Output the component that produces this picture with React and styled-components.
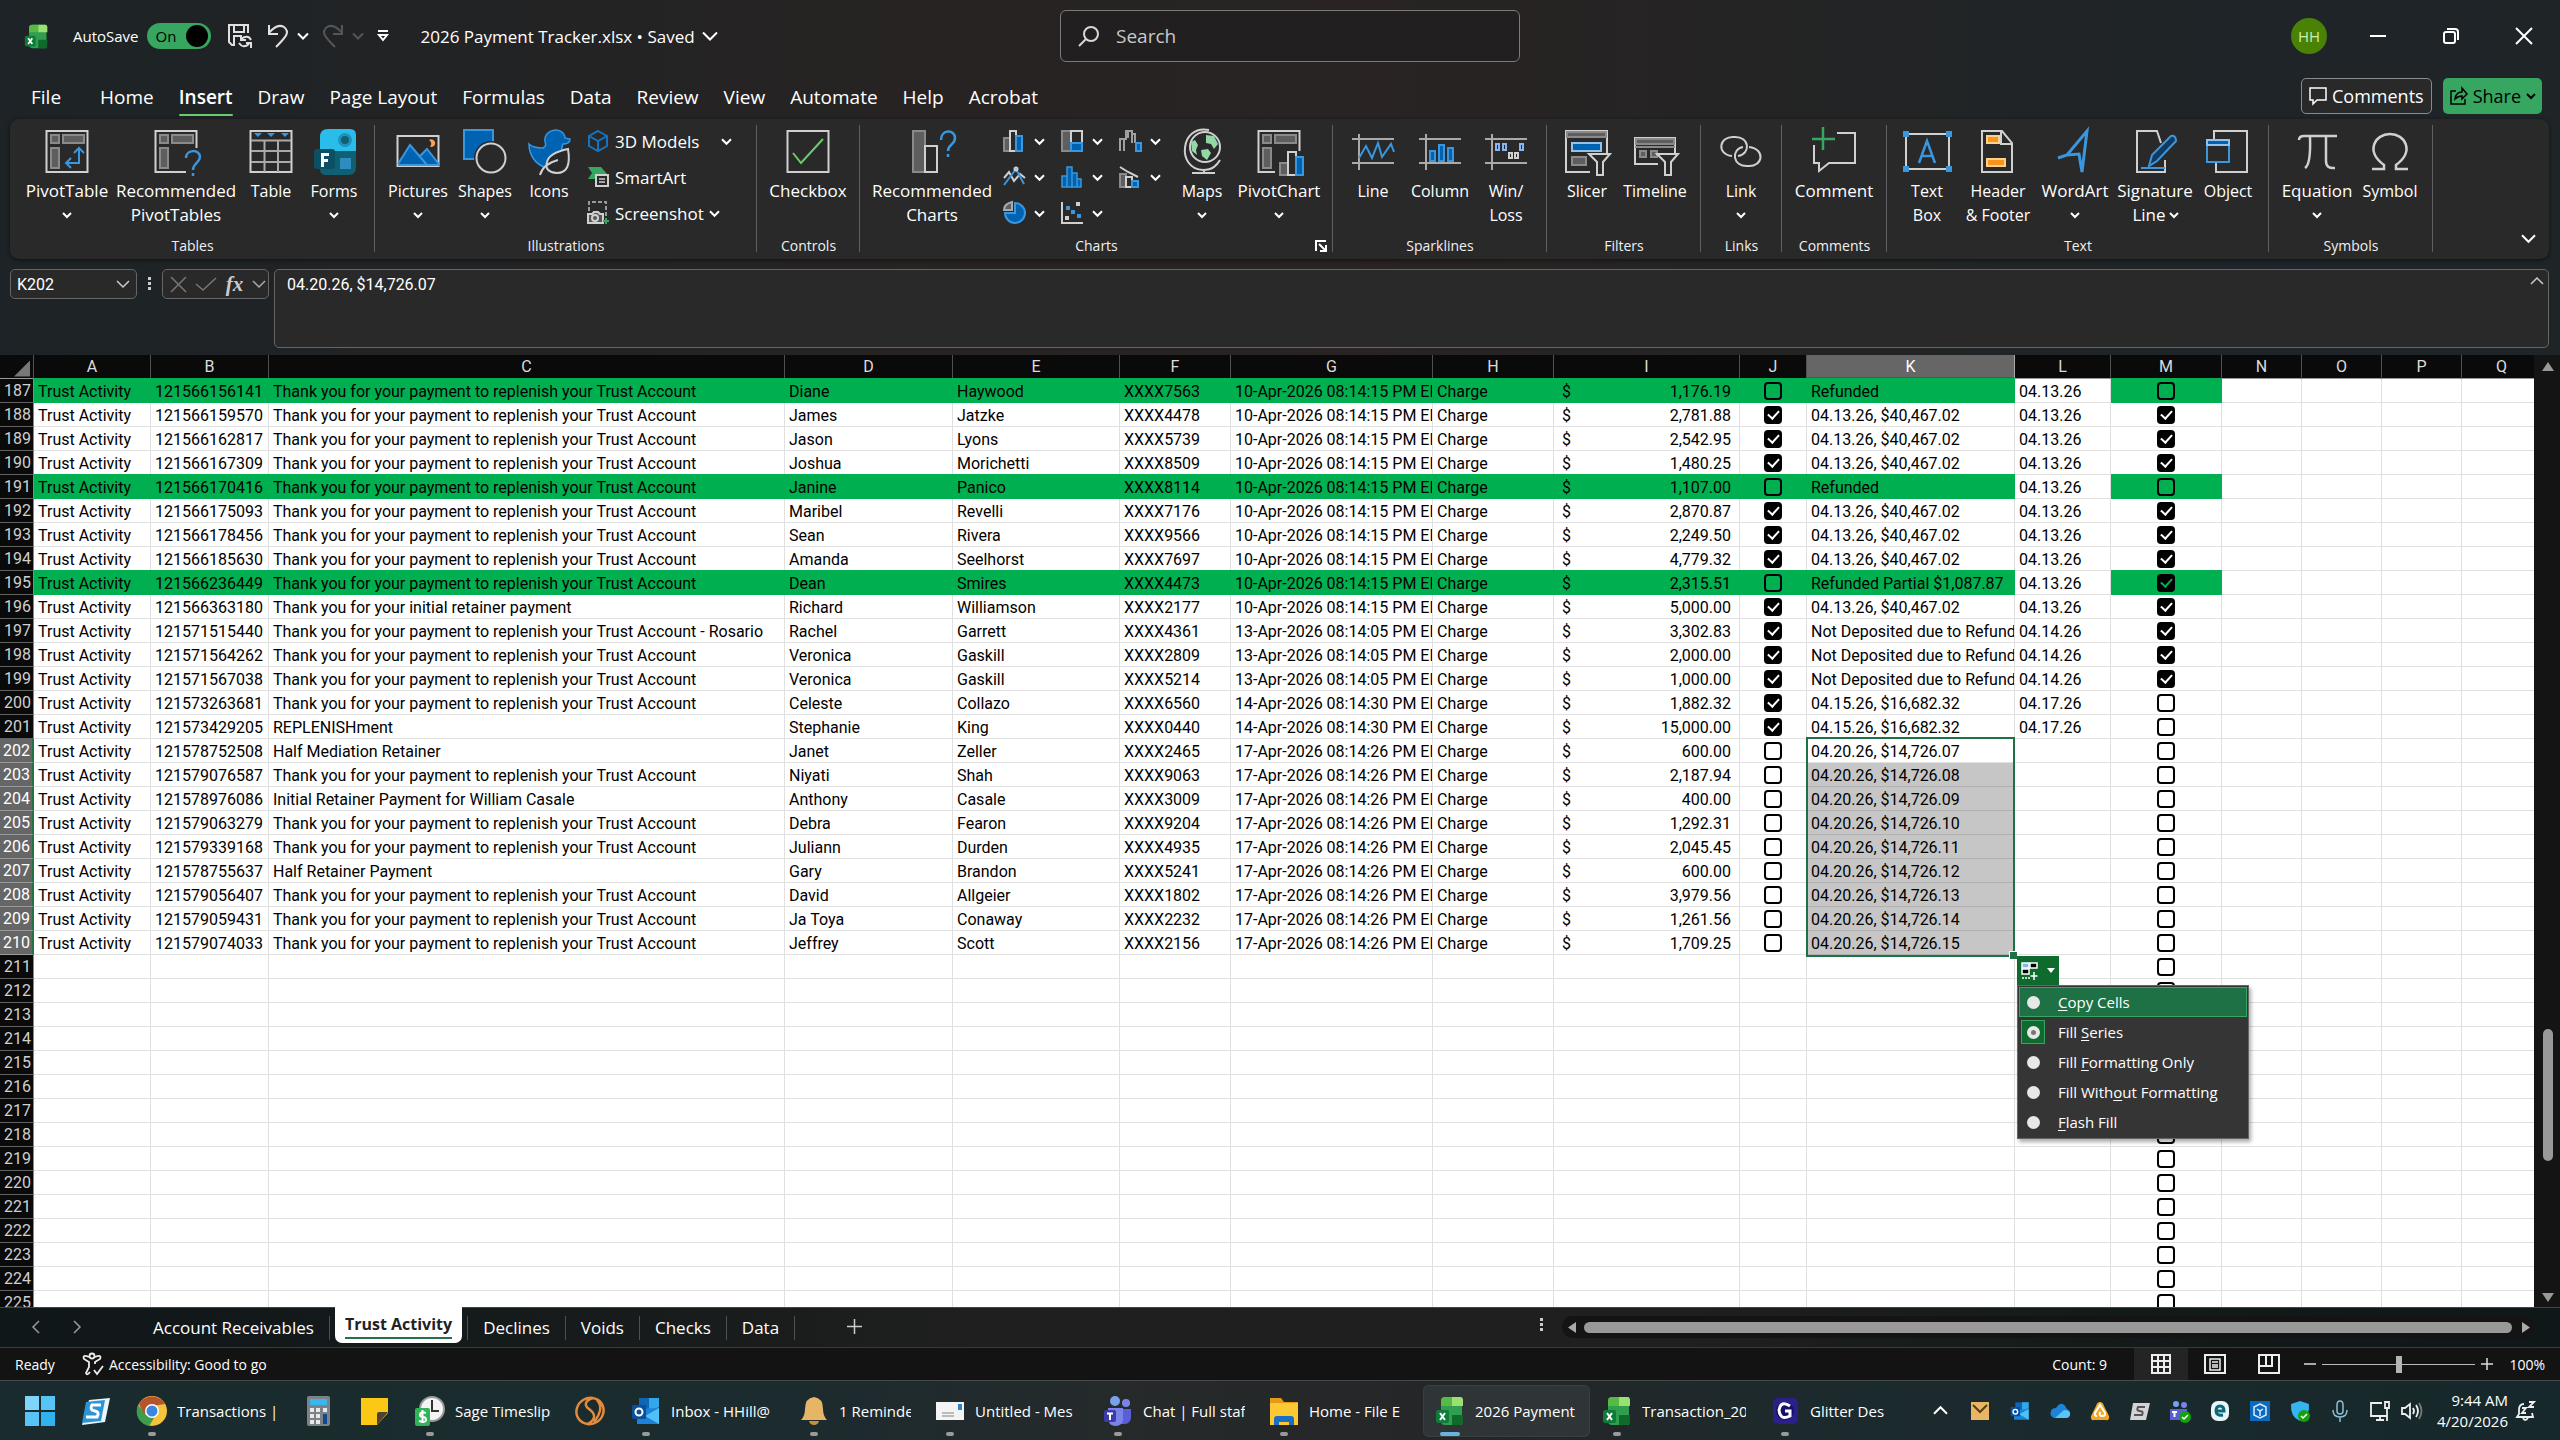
import React from "react";
import styled, { createGlobalStyle, css } from "styled-components";

const ui = `"Open Sans", "Noto Sans", sans-serif`;
const grid = `Roboto, "Liberation Sans", sans-serif`;

const Global = createGlobalStyle`
  *, *::before, *::after { box-sizing: border-box; }
  body { margin: 0; background: #1e2326; color: #fff; font-family: ${ui}; overflow: hidden; }
  button, input, textarea { font: inherit; color: inherit; background: none; border: 0; padding: 0; margin: 0; outline: none; }
  u { text-underline-offset: 2px; }
`;

/* ---------- shell ---------- */
const Shell = styled.div`
  height: 100vh;
  display: flex;
  flex-direction: column;
  background: linear-gradient(90deg, #1d2326 0%, #212325 14%, #282323 38%, #292323 54%, #232425 72%, #1e2428 88%, #1f2427 100%);
`;
const Svg = styled.svg`
  display: block;
  flex: none;
  overflow: visible;
  fill: none;
  stroke: ${(p) => p.$c || "#d0d0d0"};
  stroke-width: ${(p) => p.$sw ?? 2};
`;
const Icon = ({ s = 24, w, c, sw, children }) => (
  <Svg width={w || s} height={s} viewBox={`0 0 ${w || s} ${s}`} $c={c} $sw={sw} aria-hidden="true">{children}</Svg>
);
const Chevron = ({ s = 8, c = "#fff", up, sw = 2 }) => (
  <Svg width={s} height={s} viewBox="0 0 8 8" $c={c} $sw={(sw * 8) / s}>
    <path d={up ? "M0 6l4-4 4 4" : "M0 2l4 4 4-4"} />
  </Svg>
);

/* ---------- title bar ---------- */
const TitleBar = styled.header`
  height: 72px;
  padding-left: 20px;
  display: grid;
  grid-template-columns: minmax(0, 1fr) 460px minmax(0, 1fr);
  align-items: center;
`;
const TitleLeft = styled.div`display: flex; align-items: center; height: 100%; padding-left: 4px;`;
const AutoSave = styled.label`display: flex; align-items: center; gap: 4px; margin-left: 24px; font-size: 15px;`;
const Toggle = styled.span`
  width: 64px; height: 26px; border-radius: 13px; background: #37a660; color: #000;
  display: flex; align-items: center; justify-content: space-between; padding: 0 3px 0 9px;
  &::after { content: ""; width: 22px; height: 22px; border-radius: 50%; background: #000; }
`;
const HiddenCheck = styled.input`appearance: none; width: 0; height: 0;`;
const QuickTools = styled.div`display: flex; align-items: center; margin-left: 16px; gap: 14px;`;
const QuickButton = styled.button`display: flex; align-items: center; gap: 9px;`;
const FileName = styled.button`display: flex; align-items: center; gap: 8px; margin-left: 32px; font-size: 17px; white-space: pre;`;
const SearchBox = styled.label`
  height: 52px; display: flex; align-items: center; gap: 16px; padding: 0 17px;
  border: 1px solid #7b7979; border-radius: 6px; background: #211f1f;
`;
const SearchInput = styled.input`
  flex: 1; font-size: 19px;
  &::placeholder { color: #c9c9c9; opacity: 1; }
`;
const TitleRight = styled.div`display: flex; justify-content: flex-end; align-items: center;`;
const Avatar = styled.button`
  width: 36px; height: 36px; border-radius: 50%; background: #498205; color: #cdeeb0; font-size: 15px; margin-right: 14px;
`;
const WinButton = styled.button`width: 73px; height: 48px; display: grid; place-items: center;`;

/* ---------- ribbon ---------- */
const TabsRow = styled.nav`height: 47px; display: flex; align-items: center; padding: 5px 18px 0 18px;`;
const RibbonTab = styled.button`
  height: 36px; padding: 0 12px 0 13px; font-size: 19px; line-height: 34px; display: flex; flex-direction: column; margin-right: ${(p) => (p.$gap ? 14 : 0)}px;
  font-weight: ${(p) => (p.$on ? 600 : 400)};
  &::after { content: ""; align-self: stretch; height: 3px; border-radius: 2px; background: ${(p) => (p.$on ? "#6ccb6f" : "transparent")}; }
`;
const Fill = styled.div`flex: 1;`;
const ActionButton = styled.button`
  height: 36px; padding: 0 7px; border-radius: 5px; display: flex; align-items: center; gap: 5px; font-size: 18px;
  margin: 0 0 4px 11px;
  ${(p) => p.$primary ? css`background: #37a660; color: #000;` : css`background: #292929; border: 1px solid #8a8a8a;`}
`;
const Ribbon = styled.section`
  height: 140px; margin: 0 11px 0 10px; border-radius: 9px; background: #292929; display: flex; box-shadow: 0 1px 4px #0008;
`;
const Group = styled.div`
  position: relative; width: ${(p) => p.$w}px; padding: 0 6px; display: flex; flex-direction: column;
  &::after { content: ""; position: absolute; right: 0; top: 6px; bottom: 7px; width: 1px; background: #606060; }
`;
const GroupBody = styled.div`display: flex; height: 116px;`;
const GroupName = styled.div`font-size: 14px; line-height: 22px; text-align: center; color: #f0f0f0;`;
const Launcher = styled.button`position: absolute; right: 6px; bottom: 7px;`;
const BigButton = styled.button`
  width: ${(p) => p.$w}px; padding-top: 8px; display: flex; flex-direction: column; align-items: center; justify-content: flex-start;
  font-size: ${(p) => (p.$w < 75 ? 16 : 17)}px; line-height: 24px; white-space: nowrap;
`;
const BigLabel = styled.span`margin-top: 4px; display: flex; flex-direction: column; align-items: center;`;
const Line2 = styled.span`height: 24px; display: flex; align-items: center; gap: 4px;`;
const Stack = styled.div`display: flex; flex-direction: column; padding: 4px 0 0 4px;`;
const SmallButton = styled.button`height: 36px; display: flex; align-items: center; gap: 6px; font-size: 17px; white-space: nowrap;`;
const PushRight = styled.span`margin-left: ${(p) => p.$x || 0}px;`;
const ChartGrid = styled.div`display: grid; grid-template-columns: repeat(3, 58px); grid-auto-rows: 36px; padding: 4px 0 0 0;`;
const ChartButton = styled.button`display: flex; align-items: center; gap: 10px; padding-left: 5px;`;
const Collapse = styled.button`margin: 0 14px 14px auto; align-self: flex-end;`;

/* ---------- formula bar ---------- */
const FormulaRow = styled.section`display: flex; align-items: flex-start; height: 96px; padding: 10px 11px 8px 10px; font-size: 16px; font-family: ${grid};`;
const Box = styled.div`
  height: 30px; border: 1px solid #666; border-radius: 5px; background: #292929; display: flex; align-items: center;
`;
const NameBox = styled(Box)`width: 127px; padding: 0 7px 0 6px;`;
const NameInput = styled.input`width: 100%; min-width: 0; flex: 1;`;
const FxBox = styled(Box)`width: 107px; padding: 0 3px 0 8px; justify-content: space-between;`;
const Fx = styled.span`font: italic 700 21px/24px "Liberation Serif", serif; color: #ccc;`;
const Dots = styled.span`width: 25px; height: 30px; display: grid; place-items: center;`;
const FormulaBox = styled(Box)`flex: 1; height: 79px; margin-left: 5px; padding: 5px 5px 5px 12px; align-items: flex-start;`;
const FormulaInput = styled.textarea`flex: 1; height: 100%; resize: none; line-height: 20px; overflow: hidden;`;

/* ---------- sheet ---------- */
const SheetArea = styled.main`flex: 1; min-height: 0; display: flex; overflow: hidden;`;
const SheetClip = styled.div`flex: 1; min-width: 0; overflow: hidden; background: #fff;`;
const Sheet = styled.table`
  width: 2542px; min-width: 100%; table-layout: fixed; border-collapse: separate; border-spacing: 0; font: 16px/23px ${grid}; color: #000;
`;
const Col = styled.col`width: ${(p) => p.$w}px;`;
const ColHead = styled.th`
  height: 24px; padding: 0; font-weight: 400; color: #dcdcdc; background: #0a0a0a; border-right: 1px solid #505050; border-bottom: 1px solid #999; line-height: 23px;
  ${(p) => p.$on && css`background: #666; color: #fff; border-bottom-color: #217346; border-right-color: #aaa; box-shadow: inset 0 -1px 0 #217346;`}
`;
const Corner = styled(ColHead)`
  &::after { content: ""; display: block; margin: 4px 3px 0 auto; width: 16px; height: 16px; background: #777; clip-path: polygon(100% 0, 100% 100%, 0 100%); }
`;
const RowHead = styled.th`
  height: 24px; padding: 0 2px 0 0; font-weight: 400; text-align: right; color: #d0d0d0; background: #0a0a0a; border-right: 1px solid #8a8a8a; border-bottom: 1px solid #606060;
  ${(p) => p.$on && css`background: #666; color: #fff; border-right: 2px solid #217346; border-bottom-color: #999;`}
`;
const Cell = styled.td`
  position: relative; height: 24px; padding: 0; border-right: 1px solid #e0e0e0; border-bottom: 1px solid #e0e0e0;
  ${(p) => p.$green && css`background: #00b050; border-color: #00b050; box-shadow: 0 -1px 0 #00b050; --tick: #00b050;`}
  ${(p) => p.$sel && css`background: #c6c6c6; border-bottom-color: #b0b0b0;`}
`;
const CellText = styled.div`overflow: hidden; white-space: nowrap; padding-left: 4px; height: 23px; line-height: 25px;`;
const Money = styled.div`display: flex; justify-content: space-between; padding: 0 8px; height: 23px; line-height: 25px;`;
const Tick = styled.input`
  appearance: none; display: block; width: 18px; height: 18px; margin: 3px auto 2px; border: 2px solid #000; border-radius: 4px;
  &:checked { background: #000; }
  &:checked::after { content: ""; display: block; width: 7px; height: 11px; margin: 0 0 0 4px; border: solid var(--tick, #fff); border-width: 0 2px 2px 0; transform: rotate(42deg); }
`;
const Selection = styled.div`
  position: absolute; z-index: 2; top: -2px; left: -1px; width: calc(100% + 2px); height: 220px; border: 2px solid #1e7145; pointer-events: none;
  &::after { content: ""; position: absolute; right: -4px; bottom: -4px; width: 8px; height: 8px; background: #1e7145; border: solid #fff; border-width: 1px 0 0 1px; }
`;
const FillPopup = styled.div`position: absolute; z-index: 3; left: calc(100% + 3px); top: 217px; color: #fff; font-family: ${ui};`;
const FillButton = styled.button`width: 42px; height: 29px; background: #0e6b2d; display: flex; align-items: center; gap: 8px; padding-left: 4px;`;
const FillMenu = styled.div`
  width: 232px; padding: 1px; border: 1px solid #666; background: #353535; font-size: 15px; line-height: 28px; box-shadow: 2px 3px 4px #0005;
`;
const MenuItem = styled.label`
  height: 30px; display: flex; align-items: center; gap: 13px; padding-left: 1px; border: 1px solid ${(p) => (p.$hot ? "#37a660" : "transparent")};
  background: ${(p) => (p.$hot ? "#1e7145" : "transparent")};
`;
const Radio = styled.input`
  appearance: none; width: 24px; height: 24px; display: grid; place-items: center; border: 1px solid transparent;
  &::after { content: ""; width: 13px; height: 13px; border-radius: 50%; background: #e8e8e8; }
  &:checked { background: #0e6b2d; border-color: #37a660; }
  &:checked::after { background: #777; border: 4px solid #e8e8e8; }
`;
const VScroll = styled.div`width: 26px; background: #141414; display: flex; flex-direction: column; align-items: center; padding: 7px 0 5px 2px;`;
const VSpace = styled.div`flex: ${(p) => p.$n};`;
const VThumb = styled.div`width: 10px; height: 132px; border-radius: 5px; background: #999;`;

/* ---------- sheet tabs ---------- */
const SheetTabs = styled.nav`
  height: 40px; border-top: 1px solid #444; display: flex; align-items: stretch; font-size: 17px; padding-right: 26px;
  background: linear-gradient(90deg, #101719 0%, #171b1b 24%, #1f1f1f 38%, #1f1f1f 66%, #141a1a 82%, #0f1719 100%);
`;
const TabNav = styled.div`width: 138px; display: flex; align-items: center; padding: 0 0 2px 31px; gap: 31px;`;
const TabSlot = styled.div`
  display: flex; align-items: center; position: relative;
  &::after { content: ""; width: 1px; height: 24px; background: #4d5151; }
`;
const SheetTab = styled.button`padding: 0 15px; height: 38px; white-space: nowrap;`;
const ActiveTab = styled.button`
  height: 36px; margin: -1px 5px 0; padding: 4px 10px; border-radius: 0 0 7px 7px; background: #fff; color: #222; font-size: 16px; font-weight: 700; white-space: nowrap; display: flex; flex-direction: column;
  line-height: 26px;
  &::after { content: ""; align-self: stretch; height: 2px; background: #217346; }
`;
const AddTab = styled.button`width: 118px; display: grid; place-items: center; padding-bottom: 2px;`;
const HScroll = styled.div`
  width: 972px; height: 22px; margin: 8px 0 0 8px; border-radius: 11px; background: #141414; display: flex; align-items: center; justify-content: space-between; padding: 0 4px 0 6px;
`;
const HThumb = styled.div`flex: 1; margin: 0 10px 0 8px; height: 11px; border-radius: 6px; background: #999;`;

/* ---------- status bar ---------- */
const Status = styled.footer`height: 33px; border-top: 1px solid #3a3a3a; background: #131313; display: flex; align-items: center; font-size: 14px; padding: 0 15px;`;
const StatusButton = styled.button`display: flex; align-items: center; gap: 5px; margin-left: 27px;`;
const ViewButton = styled.button`width: 54px; height: 32px; display: grid; place-items: center; background: ${(p) => (p.$on ? "#242424" : "none")};`;
const ZoomRange = styled.input`
  appearance: none; width: 153px; height: 18px; margin: 0 6px;
  background: linear-gradient(#bbb, #bbb) center / 100% 1px no-repeat;
  &::-webkit-slider-thumb { appearance: none; width: 6px; height: 17px; background: #b4b4b4; }
`;
const Percent = styled.button`margin-left: 16px; width: 36px; text-align: right;`;

/* ---------- task bar ---------- */
const Taskbar = styled.footer`
  height: 60px; border-top: 1px solid #454a4b; display: flex; align-items: center; padding: 0 24px 0 13px; font-size: 15px;
  background: linear-gradient(90deg, #1a2b2f 0%, #1b2b2e 30%, #252a2b 43%, #252627 56%, #1c2a2d 72%, #16282b 100%);
`;
const Task = styled.button`
  position: relative; width: ${(p) => p.$w}px; height: 52px; padding: 0 12px 0 12px; border-radius: 6px; display: flex; align-items: center; gap: 10px;
  ${(p) => p.$on && css`background: #2f3536; box-shadow: inset 0 0 0 1px #3a3f40;`}
  ${(p) => p.$run && css`&::after { content: ""; position: absolute; bottom: 1px; left: ${p.$on ? 17 : 23}px; width: ${p.$on ? 20 : 8}px; height: 4px; border-radius: 2px; background: ${p.$on ? "#69b4de" : "#9a9a9a"}; }`}
`;
const TaskText = styled.span`flex: 1; min-width: 0; overflow: hidden; white-space: nowrap; text-align: left;`;
const Tray = styled.div`display: flex; align-items: center; margin-left: auto;`;
const TrayButton = styled.button`width: ${(p) => p.$w || 40}px; height: 48px; display: grid; place-items: center;`;
const Clock = styled.time`width: 86px; text-align: right; line-height: 21px; margin-right: 8px;`;

/* ---------- ribbon drawings (48 x 48) ---------- */
const G = "#5e5e5e", B = "#3a96dd", BF = "#0063b1";
const art = {
  pivot: <><rect x="3.5" y="4" width="41" height="41" /><g fill={G} stroke="#8a8a8a"><rect x="8" y="8" width="8" height="8" /><rect x="20" y="8" width="21" height="8" /><rect x="8" y="21" width="8" height="20" /></g><path stroke={B} d="M36 21v15H23M31 26l5-5 5 5M28 31l-5 5 5 5" /></>,
  recPivot: <><path d="M34 45H3.500V4h41v17" /><g fill={G} stroke="#8a8a8a"><rect x="8" y="8" width="8" height="8" /><rect x="20" y="8" width="21" height="8" /><rect x="8" y="21" width="8" height="20" /></g><path stroke={B} strokeWidth="2.500" d="M34 31c0-9 14-9 14-1 0 6-7 6-7 13M41 46v3" /></>,
  table: <><rect x="3.500" y="4" width="41" height="41" /><path stroke="#aaa" d="M4 13.500h40M4 24h40M4 35h40M17.500 14v31M31 14v31" /><path fill={B} stroke="none" d="M7 6h8l-4 4zM20 6h8l-4 4zM34 6h8l-4 4z" /></>,
  forms: <g stroke="none"><path fill="#2bbdea" d="M10 10q0-8 8-8h22q6 0 6 6v16H10z" /><path fill="#0f6073" d="M10 24h36v16q0 8-8 8H16q-6 0-6-6z" /><circle cx="35" cy="13" r="7" fill="#1f90bf" /><circle cx="35" cy="13" r="4" fill="#0f6073" /><rect x="30" y="31" width="11" height="11" fill="#2f8cc0" /><rect x="4" y="22" width="21" height="20" rx="3" fill="#0b5062" /><path fill="#fff" d="M11 26h8v3h-5v3h4v3h-4v5h-3z" /></g>,
  pictures: <><rect x="3.500" y="9" width="41" height="30" /><path fill={BF} stroke={B} d="M4 37l12-19 17 20M26 29l7-7 11 14v2H4" /><path fill="#f7a35c" stroke="none" d="M35 13q4 3 1 7 6 0 5-5-2-4-6-2z" /></>,
  shapes: <><rect x="3" y="3" width="29" height="29" fill={BF} stroke={B} /><circle cx="30" cy="31" r="17" fill="#292929" stroke="none" /><circle cx="30" cy="31" r="14.500" /></>,
  icons: <><path fill={BF} stroke={B} strokeWidth="1.500" d="M4 17q4 4 14 4 4-2 2-6c-2-14 19-16 20-4l5 1q0 5-7 5c-1 4-3 5 0 9v8c-7 15-34 6-34-17z" /><path fill="#292929" stroke="#d0d0d0" d="M43 22q4 24-11 24-13-1-10-11 2-9 21-13zM15 48q3-11 18-15" /></>,
  checkbox: <><rect x="3.500" y="4" width="41" height="41" /><path stroke="#6ccb6f" d="M9 26l8 10 22-24" /></>,
  recCharts: <><rect x="5" y="4" width="12" height="41" fill={G} stroke="#8a8a8a" /><rect x="17" y="19" width="12" height="26" /><path stroke={B} strokeWidth="2.500" d="M33 13c0-11 14-11 14-2 0 7-7 6-7 13M40 27v3" /></>,
  maps: <><path d="M31 3C2-3-2 42 25 43c10 0 14-5 17-10M26 43v4M14 46h23" /><circle cx="27" cy="20" r="15" fill="#292929" /><path fill="#92d8a4" stroke="none" d="M28 8l8 1 4 8-4 5-3-5-5-1zM13 15l4-2 3 5-2 5 1 5-5-4zM23 23l7-1 3 4-4 7-5-4z" /></>,
  pivotChart: <><path d="M20 45H3.500V4h41v20" /><g fill={G} stroke="#8a8a8a"><rect x="8" y="8" width="8" height="8" /><rect x="20" y="8" width="21" height="8" /><rect x="8" y="21" width="8" height="20" /><rect x="25" y="36" width="8" height="12" /></g><rect x="33" y="25" width="8" height="23" fill="#292929" /><rect x="41" y="30" width="7" height="18" fill={BF} stroke={B} /></>,
  line: <><path stroke="#aaa" d="M3 12h42M3 36h42M10 7v36" /><path stroke={B} d="M10 31l7-12 6 12 6-15 4 14 9-13 3 8" /></>,
  column: <><path stroke="#aaa" d="M3 12h42M3 36h42M10 7v36" /><path fill={BF} stroke={B} d="M14 34V24h5v10zM23 34V18h5v16zM32 34V21h5v13z" /></>,
  winloss: <><path stroke="#aaa" d="M3 12h42M3 36h42M10 7v36" /><path stroke="#8ab4f0" d="M14 17h3v6h-3zM21 17h3v6h-3zM38 17h3v6h-3z" /><path d="M27 26h3v5h-3zM33 26h3v5h-3z" /></>,
  slicer: <><path d="M27 45H3V4h41v22" /><path fill={G} stroke="#8a8a8a" d="M4 5h39v5H4zM9 30h14v8H9z" /><path fill={BF} stroke="#8fc3ee" d="M9 16h29v8H9z" /><path fill="#292929" d="M26 27h21l-7 8v13h-6V35z" /></>,
  timeline: <><path d="M27 37H4V11h40v16" /><path fill={G} stroke="#8a8a8a" d="M5 12h38v5H5zM9 24h6v6H9zM20 24h6v6h-6z" /><path stroke="#8a8a8a" d="M4 20h40" /><path fill="#292929" d="M26 27h21l-7 8v13h-6V35z" /></>,
  link: <><path d="M15 29c-16-2-13-20 2-19 16-1 17 17 4 19M32 20c17 2 14 20-1 19-16 1-17-17-5-19" /></>,
  comment: <><path d="M27 6h18v30H19l-10 8v-8H4V18" /><path stroke="#37a660" strokeWidth="2.500" d="M13 0v23M2 12h23" /></>,
  textbox: <><rect x="3" y="7" width="43" height="35" /><g fill={B} stroke="none"><path d="M0 4h6v6H0zM43 4h6v6h-6zM0 39h6v6H0zM43 39h6v6h-6z" /></g><path stroke={B} strokeWidth="2.500" d="M16 36l8-22 8 22M18 29h12" /></>,
  header: <><path d="M8 4h20l10 12v29H8zM27 4v13h11" /><g fill="#f7941d" stroke="#ffd08a"><rect x="13" y="9" width="12" height="7" /><rect x="13" y="32" width="18" height="7" /></g></>,
  wordart: <path stroke={B} strokeWidth="3" d="M7 31l9-3 20-24-5 41-3-18-12 1" />,
  signature: <><path d="M24 45H6V4h20l4 12M34 33v12h-10" /><path fill="#123a60" stroke={B} d="M18 39l3-11 19-19q5-1 5 5L26 34zM10 41h24" /></>,
  object: <><path d="M10 12V4h33v41H12V36" /><path fill="#292929" stroke={B} d="M3 15h22v20H3z" /><path fill={BF} stroke="#8fc3ee" d="M3 13h22v5H3z" /></>,
  equation: <path strokeWidth="2.500" d="M6 13q0-4 5-4h33M17 10q1 27-5 31M33 10v24q0 8 9 7" />,
  symbol: <path strokeWidth="2.500" d="M6 42h12v-4C-1 24 9 7 24 7s25 17 6 31v4h12" />,
};
const chartArt = [
  <><path fill={G} stroke="#8a8a8a" d="M1 8h6v13H1z" /><path d="M7 1h6v20H7z" /><path fill={BF} stroke={B} d="M13 6h6v15h-6z" /></>,
  <><path fill={G} stroke="#8a8a8a" d="M1 1h9v20H1z" /><path d="M10 1h11v12H10z" /><path fill={BF} stroke={B} d="M10 13h11v8H10z" /></>,
  <><path stroke="#a0a0a0" d="M1 21V9h6V1h6v12M5 21V9M9 8V1M13 4h3v9" /><path fill={BF} stroke={B} d="M17 13h5v8h-5z" /></>,
  <><path d="M1 12l5-6 5 9 6-7 5 4" /><path stroke={B} d="M1 19L13 3l8 15" /><circle cx="13" cy="3" r="1.500" /></>,
  <path fill={BF} stroke={B} d="M1 10h5V1h5v6h5v6h4v8H1zM6 10v11M11 7v14M16 13v8" strokeWidth="1.500" />,
  <><path d="M1 1l8 5 10 5" /><path fill={G} stroke="#8a8a8a" d="M1 8h6v13H1z" /><path d="M7 11h6v10H7z" /><path fill={BF} stroke={B} d="M13 15h6v6h-6z" /></>,
  <><path fill={BF} stroke={B} d="M12 1a10 10 0 1 1-10 10h10z" /><path fill={G} stroke="#aaa" d="M9 8H1q0-6 8-8z" /></>,
  <><path d="M1 0v21h21" /><path fill={B} stroke="none" d="M5 4h4v4H5zM10 8h4v4h-4zM16 12h4v4h-4z" /><path fill="#d0d0d0" stroke="none" d="M15 0h4v4h-4zM4 14h4v4H4z" /></>,
];

const Big = ({ art: a, w, l1, l2, chev }) => (
  <BigButton $w={w} type="button">
    <Icon s={48}>{art[a]}</Icon>
    <BigLabel>
      <span>{l1}</span>
      {(l2 || chev) && <Line2>{l2}{chev && <Chevron />}</Line2>}
    </BigLabel>
  </BigButton>
);
const RibbonGroup = ({ w, name, children, extra }) => (
  <Group $w={w}><GroupBody>{children}</GroupBody><GroupName>{name}</GroupName>{extra}</Group>
);

/* ---------- sheet data ---------- */
const columns = [["A", 117], ["B", 118], ["C", 516], ["D", 168], ["E", 167], ["F", 111], ["G", 202], ["H", 121], ["I", 186], ["J", 67], ["K", 208], ["L", 96], ["M", 111], ["N", 80], ["O", 80], ["P", 80], ["Q", 80]];
const T = "Thank you for your payment to replenish your Trust Account";
const d1 = "10-Apr-2026 08:14:15 PM EDT", d2 = "13-Apr-2026 08:14:05 PM EDT", d3 = "14-Apr-2026 08:14:30 PM EDT", d4 = "17-Apr-2026 08:14:26 PM EDT";
const dep = "04.13.26, $40,467.02", nd = "Not Deposited due to Refund";
const rows = [
  ["121566156141", T, "Diane", "Haywood", "XXXX7563", d1, "1,176.19", 0, "Refunded", "04.13.26", 0, 1],
  ["121566159570", T, "James", "Jatzke", "XXXX4478", d1, "2,781.88", 1, dep, "04.13.26", 1],
  ["121566162817", T, "Jason", "Lyons", "XXXX5739", d1, "2,542.95", 1, dep, "04.13.26", 1],
  ["121566167309", T, "Joshua", "Morichetti", "XXXX8509", d1, "1,480.25", 1, dep, "04.13.26", 1],
  ["121566170416", T, "Janine", "Panico", "XXXX8114", d1, "1,107.00", 0, "Refunded", "04.13.26", 0, 1],
  ["121566175093", T, "Maribel", "Revelli", "XXXX7176", d1, "2,870.87", 1, dep, "04.13.26", 1],
  ["121566178456", T, "Sean", "Rivera", "XXXX9566", d1, "2,249.50", 1, dep, "04.13.26", 1],
  ["121566185630", T, "Amanda", "Seelhorst", "XXXX7697", d1, "4,779.32", 1, dep, "04.13.26", 1],
  ["121566236449", T, "Dean", "Smires", "XXXX4473", d1, "2,315.51", 0, "Refunded Partial $1,087.87", "04.13.26", 1, 1],
  ["121566363180", "Thank you for your initial retainer payment", "Richard", "Williamson", "XXXX2177", d1, "5,000.00", 1, dep, "04.13.26", 1],
  ["121571515440", T + " - Rosario", "Rachel", "Garrett", "XXXX4361", d2, "3,302.83", 1, nd, "04.14.26", 1],
  ["121571564262", T, "Veronica", "Gaskill", "XXXX2809", d2, "2,000.00", 1, nd, "04.14.26", 1],
  ["121571567038", T, "Veronica", "Gaskill", "XXXX5214", d2, "1,000.00", 1, nd, "04.14.26", 1],
  ["121573263681", T, "Celeste", "Collazo", "XXXX6560", d3, "1,882.32", 1, "04.15.26, $16,682.32", "04.17.26", 0],
  ["121573429205", "REPLENISHment", "Stephanie", "King", "XXXX0440", d3, "15,000.00", 1, "04.15.26, $16,682.32", "04.17.26", 0],
  ["121578752508", "Half Mediation Retainer", "Janet", "Zeller", "XXXX2465", d4, "600.00", 0, "04.20.26, $14,726.07", "", 0],
  ["121579076587", T, "Niyati", "Shah", "XXXX9063", d4, "2,187.94", 0, "04.20.26, $14,726.08", "", 0],
  ["121578976086", "Initial Retainer Payment for William Casale", "Anthony", "Casale", "XXXX3009", d4, "400.00", 0, "04.20.26, $14,726.09", "", 0],
  ["121579063279", T, "Debra", "Fearon", "XXXX9204", d4, "1,292.31", 0, "04.20.26, $14,726.10", "", 0],
  ["121579339168", T, "Juliann", "Durden", "XXXX4935", d4, "2,045.45", 0, "04.20.26, $14,726.11", "", 0],
  ["121578755637", "Half Retainer Payment", "Gary", "Brandon", "XXXX5241", d4, "600.00", 0, "04.20.26, $14,726.12", "", 0],
  ["121579056407", T, "David", "Allgeier", "XXXX1802", d4, "3,979.56", 0, "04.20.26, $14,726.13", "", 0],
  ["121579059431", T, "Ja Toya", "Conaway", "XXXX2232", d4, "1,261.56", 0, "04.20.26, $14,726.14", "", 0],
  ["121579074033", T, "Jeffrey", "Scott", "XXXX2156", d4, "1,709.25", 0, "04.20.26, $14,726.15", "", 0],
];
const emptyRows = Array.from({ length: 15 }, (_, i) => 211 + i);

const FillOptions = () => (
  <FillPopup>
    <FillButton type="button" aria-label="Auto Fill Options">
      <Icon s={18} sw={1.5}><g stroke="#fff"><path fill="#7fb8ea" d="M1 1h7v5H1z" /><path fill="#000" d="M9 1h7v5H9zM1 7h7v5H1z" /><path strokeDasharray="2 1" d="M1 16h8" /><path d="M13 10v8M9.500 14h7" /></g></Icon>
      <Icon s={6} w={8}><path d="M0 0h8L4 5z" fill="#fff" stroke="none" /></Icon>
    </FillButton>
    <FillMenu>
      <MenuItem $hot><Radio type="radio" name="fill" /><span><u>C</u>opy Cells</span></MenuItem>
      <MenuItem><Radio type="radio" name="fill" defaultChecked /><span>Fill <u>S</u>eries</span></MenuItem>
      <MenuItem><Radio type="radio" name="fill" /><span>Fill <u>F</u>ormatting Only</span></MenuItem>
      <MenuItem><Radio type="radio" name="fill" /><span>Fill With<u>o</u>ut Formatting</span></MenuItem>
      <MenuItem><Radio type="radio" name="fill" /><span><u>F</u>lash Fill</span></MenuItem>
    </FillMenu>
  </FillPopup>
);

const DataRow = ({ n, r }) => {
  const [id, memo, first, last, card, date, amt, j, k, l, m, g] = r;
  const inSel = n >= 202;
  return (
    <tr>
      <RowHead $on={inSel}>{n}</RowHead>
      {["Trust Activity", id, memo, first, last, card, date, "Charge"].map((t, i) => (
        <Cell key={i} $green={g}><CellText>{t}</CellText></Cell>
      ))}
      <Cell $green={g}><Money><span>$</span><span>{amt}</span></Money></Cell>
      <Cell $green={g}><Tick type="checkbox" aria-label={`J${n}`} defaultChecked={!!j} /></Cell>
      <Cell $green={g} $sel={n > 202}>
        <CellText>{k}</CellText>
        {n === 202 && <><Selection /><FillOptions /></>}
      </Cell>
      <Cell><CellText>{l}</CellText></Cell>
      <Cell $green={g}><Tick type="checkbox" aria-label={`M${n}`} defaultChecked={!!m} /></Cell>
      <Cell /><Cell /><Cell /><Cell />
    </tr>
  );
};

/* ---------- task bar drawings ---------- */
const Excel = ({ s = 30 }) => (
  <Svg width={s} height={s} viewBox="0 0 30 30" $sw={0}>
    <path fill="#2f9e4f" d="M6 5q0-4 4-4h17v28H10q-4 0-4-4z" /><path fill="#9be070" d="M17 1h8q3 0 3 3v6H17z" /><path fill="#58b947" d="M10 1h7v9H6V5q0-4 4-4z" /><path fill="#0f6a2c" d="M17 19h11v7q0 3-3 3h-8z" />
    <rect x="1" y="14" width="13" height="13" rx="2" fill="#0f7a3a" /><path stroke="#fff" strokeWidth="2" d="M5 17l5 7M10 17l-5 7" />
  </Svg>
);
const Outlook = ({ s = 30 }) => (
  <Svg width={s} height={s} viewBox="0 0 30 30" $sw={0}>
    <path fill="#1066b5" d="M8 2h20v12H8z" /><path fill="#32a8e8" d="M18 2h10v9l-10 4z" /><path fill="#1b84d8" d="M6 13l22-1v16H6z" /><path fill="#50c0f5" d="M28 12v16L14 20z" />
    <rect x="1" y="9" width="14" height="14" rx="1" fill="#0a4f9e" /><circle cx="8" cy="16" r="3.500" stroke="#fff" strokeWidth="2" fill="none" />
  </Svg>
);
const Teams = ({ s = 30 }) => (
  <Svg width={s} height={s} viewBox="0 0 30 30" $sw={0}>
    <circle cx="12" cy="5" r="5" fill="#7aa0f0" /><circle cx="23" cy="7" r="4" fill="#7b83eb" /><path fill="#5b5fd6" d="M17 13h11v9q-1 6-7 6h-4z" /><path fill="#7b83eb" d="M5 12h15v12q-1 6-8 6-7-1-7-8z" />
    <rect x="1" y="14" width="12" height="12" rx="2" fill="#3b3ca8" /><path stroke="#fff" strokeWidth="2" d="M4 17.500h6M7 17v7" />
  </Svg>
);
const tasks = [
  [56, <g><path fill="#7fd4fa" d="M0 0h14v14H0z" /><path fill="#58c4f6" d="M16 0h14v14H16zM0 16h14v14H0z" /><path fill="#2fb2ee" d="M16 16h14v14H16z" /></g>, "", "Start"],
  [56, <g><path fill="#e9f4fc" d="M8 4l21-2-5 24-23 3z" /><path fill="#2b93d6" d="M5 6l19-2-4 21-19 2z" /><path stroke="#fff" strokeWidth="3" d="M20 9h-9q-3 5 3 6 5 1 2 6H5" /></g>, "", "Sage"],
  [166, <g><circle cx="15" cy="15" r="15" fill="#f6c23c" /><path fill="#b4552d" d="M2 8a15 15 0 0 1 26 0l-13 2-8 9z" /><path fill="#3f9c4b" d="M1 9l8 10 8 3-5 8A15 15 0 0 1 1 9z" /><circle cx="15" cy="15" r="7" fill="#fff" /><circle cx="15" cy="15" r="5.500" fill="#3b86e0" /></g>, "Transactions |", "", 1],
  [56, <g><rect x="4" width="23" height="30" rx="2" fill="#7d8286" /><path fill="#39b6ee" d="M7 3h17v6H7z" /><path fill="#e8e8e8" d="M7 12h4v4H7zM13 12h4v4h-4zM7 18h4v4H7zM13 18h4v4h-4zM7 24h4v4H7zM13 24h4v4h-4zM20 12h4v4h-4z" /><path fill="#0d4a90" d="M20 18h4v10h-4z" /></g>, "", "Calculator"],
  [56, <g><path fill="#fbc915" d="M2 2h27v15L18 29H2z" /><path fill="#4a4335" d="M18 29V18q0-2 2-2h9z" /></g>, "", "Sticky Notes"],
  [160, <g><circle cx="17" cy="13" r="12" fill="#f4f4f4" stroke="#999" strokeWidth="2" /><path stroke="#333" strokeWidth="2" d="M17 4v11h7" /><rect x="0" y="12" width="15" height="18" rx="2" fill="#2fb457" /><path stroke="#fff" strokeWidth="2" d="M11 17q-6-2-6 2 0 2 3 2t3 3q0 3-7 1M7.500 14v13" /></g>, "Sage Timeslips", "", 1],
  [56, <g stroke="#e58a3a" strokeWidth="2.500" fill="none"><path d="M13 28C3 27 0 18 2 12 4 5 11 1 18 2c-7 2-10 7-4 11 7 5 7 10-1 15zM17 2c10 1 13 10 11 16-2 7-9 11-16 10M22 4c5 5 4 13-3 22" /></g>, "", "Swirl"],
  [168, "outlook", "Inbox - HHill@", "", 1],
  [136, <g fill="#e6b566"><path d="M15 1q9 1 9 12 0 7 4 11H2q4-4 4-11Q6 2 15 1z" /><path d="M10 25h10q-1 4-5 4t-5-4z" fill="#c98f3a" /></g>, "1 Reminder", "", 1],
  [168, <g><path fill="#f4f4f4" d="M1 6h28v18H1z" /><path fill="#2b84c8" d="M23 8h4v6h-4z" /><path stroke="#bbb" strokeWidth="2" d="M7 17h12M7 20h12" /></g>, "Untitled - Mes", "", 1],
  [166, "teams", "Chat | Full staf", "", 1],
  [166, <g><path fill="#e59a1a" d="M1 2h11l3 4h14v10H1z" /><path fill="#fcc934" d="M1 7h28v22H1z" /><path fill="#1a6fc4" d="M5 29v-6q0-3 3-3h14q3 0 3 3v6h-5v-3H10v3z" /></g>, "Home - File E", "", 1],
  [167, "excel", "2026 Payment", "", 1, 1],
  [168, "excel", "Transaction_20", "", 1],
  [140, <g><rect x="3" y="2" width="25" height="26" rx="5" fill="#2b1f8a" /><circle cx="15" cy="15" r="9" fill="#17106a" /><path stroke="#fff" strokeWidth="3" d="M20 10q-9-6-11 4 1 11 11 6v-5h-5" /></g>, "Glitter Des", "", 1],
];
const special = { outlook: <Outlook />, teams: <Teams />, excel: <Excel /> };

const tray = [
  <Icon s={20} sw={0}><path fill="#e8b765" d="M1 1h18v18H1z" /><path stroke="#5a3d10" strokeWidth="2" d="M3 4l7 7 7-7" /></Icon>,
  <Outlook s={20} />,
  <Icon s={20} sw={0}><path fill="#1b84d8" d="M4 17q-5-2-3-7 1-3 5-3 6-9 11 1 4 2 3 6-1 3-4 3z" /><path fill="#5cc4f6" d="M5 17l9-8q7 0 6 5-1 3-4 3z" /></Icon>,
  <Icon s={20} sw={0}><path fill="#f5a623" d="M10 1q3 0 4 4l5 10q1 5-4 4H5q-5 1-4-4L6 5q1-4 4-4z" /><path stroke="#fff" strokeWidth="2" d="M7 15q-3 0-2-3l5-8 5 8q1 3-3 3-3 0-2-4" /></Icon>,
  <Icon s={20} sw={0}><path fill="#d4d4d4" d="M3 2h17l-4 17H0z" /><path stroke="#555" strokeWidth="2" d="M15 6H8q-2 4 2 4t2 4H4" /></Icon>,
  <Icon s={20} sw={0}><circle cx="6" cy="3" r="3" fill="#7aa0f0" /><circle cx="14" cy="4" r="3" fill="#7b83eb" /><path fill="#5b5fd6" d="M0 8h17v11H0z" /><path stroke="#fff" strokeWidth="2" d="M2 11h5M4.500 11v5" /><circle cx="15" cy="16" r="6" fill="#13a10e" /><path stroke="#fff" strokeWidth="1.500" d="M12 16l2 2 4-4" /></Icon>,
  <Icon s={20} sw={0}><rect x="1" y="0" width="18" height="20" rx="7" fill="#e8f6f8" /><path stroke="#0b6878" strokeWidth="3" d="M6 10h8q0-5-4-5T6 10q0 5 7 4" /></Icon>,
  <Icon s={20} sw={0}><path fill="#0b6ac0" d="M0 0h20v20H0z" /><path stroke="#d8ecff" strokeWidth="1.500" d="M10 3l6 3v8l-6 3-6-3V6zM7 8l3 2 3-2M10 10v5" /></Icon>,
  <Icon s={20} sw={0}><path fill="#36b4ee" d="M10 0l9 3q1 13-9 17Q0 16 1 3z" /><circle cx="14" cy="15" r="6" fill="#13a10e" /><path stroke="#fff" strokeWidth="1.500" d="M11 15l2 2 4-4" /></Icon>,
  <Icon s={20} c="#8cc0d4" sw={1.5}><path d="M7 4q0-4 3-4t3 4v6q0 3-3 3t-3-3zM3 9q0 7 7 7t7-7M10 16v5" /></Icon>,
];

export default function App() {
  return (
    <Shell>
      <Global />
      <TitleBar>
        <TitleLeft>
          <Excel s={25} />
          <AutoSave>AutoSave<HiddenCheck type="checkbox" defaultChecked /><Toggle>On</Toggle></AutoSave>
          <QuickTools>
            <QuickButton type="button" aria-label="Save"><Icon s={26}><path stroke="#e0e0e0" d="M8 22H5l-3-3V2h19v8M7 2v7h10V2M7 22v-9h7M24 17q-3-6-10-1M14 12v5h5M12 20q4 6 10 1M24 25v-5h-5" /></Icon></QuickButton>
            <QuickButton type="button" aria-label="Undo"><Icon s={24} w={22}><path stroke="#e0e0e0" d="M2 1v9h9M2 9Q10-1 17 3c6 5 3 9-8 20" /></Icon><Chevron s={10} /></QuickButton>
            <QuickButton type="button" aria-label="Redo"><Icon s={24} w={22}><path stroke="#555" d="M20 1v9h-9M20 9Q12-1 5 3c-6 5-3 9 8 20" /></Icon><Chevron s={10} c="#555" /></QuickButton>
            <QuickButton type="button" aria-label="Customize Quick Access Toolbar"><Icon s={12}><path stroke="#fff" d="M1 1h10M2 5h8l-4 5z" /></Icon></QuickButton>
          </QuickTools>
          <FileName type="button">2026 Payment Tracker.xlsx • Saved<Chevron s={14} sw={2} /></FileName>
        </TitleLeft>
        <SearchBox>
          <Icon s={22} c="#d8d8d8"><circle cx="13" cy="9" r="7" /><path d="M8 14l-7 7" /></Icon>
          <SearchInput placeholder="Search" aria-label="Search" />
        </SearchBox>
        <TitleRight>
          <Avatar type="button">HH</Avatar>
          <WinButton type="button" aria-label="Minimize"><Icon s={16} c="#fff"><path d="M0 8h16" /></Icon></WinButton>
          <WinButton type="button" aria-label="Restore"><Icon s={16} c="#fff"><rect x="1" y="4" width="11" height="11" rx="2" /><path d="M4 1h8q3 0 3 3v8" /></Icon></WinButton>
          <WinButton type="button" aria-label="Close"><Icon s={16} c="#fff"><path d="M0 0l16 16M16 0L0 16" /></Icon></WinButton>
        </TitleRight>
      </TitleBar>

      <TabsRow>
        {["File", "Home", "Insert", "Draw", "Page Layout", "Formulas", "Data", "Review", "View", "Automate", "Help", "Acrobat"].map((t) => (
          <RibbonTab key={t} type="button" $on={t === "Insert"} $gap={t === "File"}>{t}</RibbonTab>
        ))}
        <Fill />
        <ActionButton type="button"><Icon s={18} c="#fff" sw={1.5}><path d="M1 1h16v12H8l-4 4v-4H1z" /></Icon>Comments</ActionButton>
        <ActionButton type="button" $primary><Icon s={18} c="#000" sw={1.5}><path d="M6 4H1v13h14v-5M5 12q1-7 7-7V1l5 6-5 5V9q-4 0-7 3z" /></Icon>Share<PushRight $x={1}><Chevron c="#000" /></PushRight></ActionButton>
      </TabsRow>

      <Ribbon>
        <RibbonGroup w={365} name="Tables">
          <Big art="pivot" w={102} l1="PivotTable" chev />
          <Big art="recPivot" w={116} l1="Recommended" l2="PivotTables" />
          <Big art="table" w={74} l1="Table" />
          <Big art="forms" w={52} l1="Forms" chev />
        </RibbonGroup>
        <RibbonGroup w={382} name="Illustrations">
          <Big art="pictures" w={74} l1="Pictures" chev />
          <Big art="shapes" w={60} l1="Shapes" chev />
          <Big art="icons" w={68} l1="Icons" />
          <Stack>
            <SmallButton type="button"><Icon s={22} c="#1574bf"><path d="M11 1l9 5v10l-9 5-9-5V6zM2 6l9 5 9-5M11 11v10" /></Icon>3D Models<PushRight $x={17}><Chevron s={9} /></PushRight></SmallButton>
            <SmallButton type="button"><Icon s={22}><path fill="#37a660" stroke="none" d="M1 1h13l6 7-4 5H1l4-6z" /><path fill="#292929" d="M9 9h12v11H9z" /><path strokeWidth="1.500" d="M12 13h6M12 16h6" /></Icon>SmartArt</SmallButton>
            <SmallButton type="button"><Icon s={24} w={22}><path stroke="#999" strokeDasharray="4 2" d="M2 10V1h17v16" /><path fill="#555" d="M1 13h4l2-2h4l2 2h3v9H1z" /><circle cx="8" cy="17" r="3" /><path stroke="#37a660" d="M19 17v6M16 20h6" /></Icon>Screenshot<Chevron s={9} /></SmallButton>
          </Stack>
        </RibbonGroup>
        <RibbonGroup w={103} name="Controls"><Big art="checkbox" w={90} l1="Checkbox" /></RibbonGroup>
        <RibbonGroup w={473} name="Charts" extra={<Launcher type="button" aria-label="See all charts"><Icon s={12} c="#fff"><path d="M1 11V1h10M4 4l6 6M11 5v6H5" /></Icon></Launcher>}>
          <Big art="recCharts" w={132} l1="Recommended" l2="Charts" />
          <ChartGrid>
            {chartArt.map((c, i) => <ChartButton key={i} type="button" aria-label={`Chart type ${i + 1}`}><Icon s={22}>{c}</Icon><Chevron s={9} /></ChartButton>)}
          </ChartGrid>
          <Big art="maps" w={60} l1="Maps" chev />
          <Big art="pivotChart" w={94} l1="PivotChart" chev />
        </RibbonGroup>
        <RibbonGroup w={214} name="Sparklines">
          <Big art="line" w={68} l1="Line" />
          <Big art="column" w={66} l1="Column" />
          <Big art="winloss" w={66} l1="Win/" l2="Loss" />
        </RibbonGroup>
        <RibbonGroup w={154} name="Filters">
          <Big art="slicer" w={68} l1="Slicer" />
          <Big art="timeline" w={68} l1="Timeline" />
        </RibbonGroup>
        <RibbonGroup w={81} name="Links"><Big art="link" w={68} l1="Link" chev /></RibbonGroup>
        <RibbonGroup w={105} name="Comments"><Big art="comment" w={92} l1="Comment" /></RibbonGroup>
        <RibbonGroup w={382} name="Text">
          <Big art="textbox" w={68} l1="Text" l2="Box" />
          <Big art="header" w={74} l1="Header" l2="& Footer" />
          <Big art="wordart" w={80} l1="WordArt" chev />
          <Big art="signature" w={80} l1="Signature" l2="Line" chev />
          <Big art="object" w={66} l1="Object" />
        </RibbonGroup>
        <RibbonGroup w={164} name="Symbols">
          <Big art="equation" w={84} l1="Equation" chev />
          <Big art="symbol" w={62} l1="Symbol" />
        </RibbonGroup>
        <Collapse type="button" aria-label="Collapse ribbon"><Chevron s={13} /></Collapse>
      </Ribbon>

      <FormulaRow>
        <NameBox><NameInput defaultValue="K202" aria-label="Name box" /><Chevron s={12} c="#ccc" sw={1.5} /></NameBox>
        <Dots><Icon s={14} w={4} sw={0}><path fill="#ccc" d="M0 0h3v3H0zM0 5h3v3H0zM0 10h3v3H0z" /></Icon></Dots>
        <FxBox>
          <Icon s={15} c="#777" sw={1.5}><path d="M0 0l15 15M15 0L0 15" /></Icon>
          <Icon s={14} w={20} c="#777" sw={1.5}><path d="M0 7l7 6L20 1" /></Icon>
          <Fx>fx</Fx>
          <Chevron s={12} c="#aaa" sw={1.5} />
        </FxBox>
        <FormulaBox>
          <FormulaInput defaultValue="04.20.26, $14,726.07" aria-label="Formula" />
          <Chevron s={12} c="#ccc" up sw={1.5} />
        </FormulaBox>
      </FormulaRow>

      <SheetArea>
        <SheetClip>
          <Sheet>
            <colgroup><Col $w={34} />{columns.map(([n, w]) => <Col key={n} $w={w} />)}</colgroup>
            <thead><tr><Corner />{columns.map(([n]) => <ColHead key={n} $on={n === "K"}>{n}</ColHead>)}</tr></thead>
            <tbody>
              {rows.map((r, i) => <DataRow key={i} n={187 + i} r={r} />)}
              {emptyRows.map((n) => (
                <tr key={n}>
                  <RowHead>{n}</RowHead>
                  {columns.map(([c]) => <Cell key={c}>{c === "M" && <Tick type="checkbox" aria-label={`M${n}`} />}</Cell>)}
                </tr>
              ))}
            </tbody>
          </Sheet>
        </SheetClip>
        <VScroll>
          <Icon s={9} w={12} sw={0}><path fill="#999" d="M6 0l6 9H0z" /></Icon>
          <VSpace $n={5} /><VThumb /><VSpace $n={1} />
          <Icon s={9} w={12} sw={0}><path fill="#999" d="M6 9l6-9H0z" /></Icon>
        </VScroll>
      </SheetArea>

      <SheetTabs>
        <TabNav>
          <Icon s={12} w={8} c="#999" sw={1.5}><path d="M8 0L2 6l6 6" /></Icon>
          <Icon s={12} w={8} c="#999" sw={1.5}><path d="M4 0l6 6-6 6" /></Icon>
        </TabNav>
        <TabSlot><SheetTab type="button">Account Receivables</SheetTab></TabSlot>
        <ActiveTab type="button">Trust Activity</ActiveTab>
        <TabSlot />
        {["Declines", "Voids", "Checks", "Data"].map((t) => <TabSlot key={t}><SheetTab type="button">{t}</SheetTab></TabSlot>)}
        <AddTab type="button" aria-label="New sheet"><Icon s={15} c="#ccc" sw={1.5}><path d="M7.500 0v15M0 7.500h15" /></Icon></AddTab>
        <Fill />
        <Dots><Icon s={14} w={4} sw={0}><path fill="#ccc" d="M0 2h3v3H0zM0 7h3v3H0zM0 12h3v3H0z" /></Icon></Dots>
        <HScroll>
          <Icon s={11} w={8} sw={0}><path fill="#aaa" d="M8 0v11L0 5.500z" /></Icon>
          <HThumb />
          <Icon s={11} w={8} sw={0}><path fill="#aaa" d="M0 0v11l8-5.500z" /></Icon>
        </HScroll>
      </SheetTabs>

      <Status>
        Ready
        <StatusButton type="button">
          <Icon s={22} c="#eee" sw={1.8}><circle cx="10" cy="3" r="2.500" /><path d="M7 4Q0 1 2 6l5 3v5l-3 6q1 3 4-1M13 4q7-3 5 2l-5 3v2M12 17l3 4 6-8" /></Icon>
          Accessibility: Good to go
        </StatusButton>
        <Fill />
        <PushRight>Count: 9</PushRight><PushRight $x={27} />
        <ViewButton $on type="button" aria-label="Normal view"><Icon s={20} c="#eee"><path d="M1 1h18v18H1zM1 7h18M1 13h18M7 1v18M13 1v18" /></Icon></ViewButton>
        <ViewButton type="button" aria-label="Page layout view"><Icon s={20} w={22} c="#eee"><path d="M1 1h20v18H1z" /><path d="M6 5h10v11H6zM8 8h6M8 11h6M8 13h6" strokeWidth="1.500" /></Icon></ViewButton>
        <ViewButton type="button" aria-label="Page break preview"><Icon s={20} w={22} c="#eee"><path d="M1 1h20v18H1zM1 12h13V1M8 1v11" /></Icon></ViewButton>
        <PushRight $x={8} />
        <Icon s={12} c="#ddd" sw={1.5}><path d="M0 6h12" /></Icon>
        <ZoomRange type="range" aria-label="Zoom" defaultValue={50} />
        <Icon s={12} c="#ddd" sw={1.5}><path d="M0 6h12M6 0v12" /></Icon>
        <Percent type="button">100%</Percent>
      </Status>

      <Taskbar>
        {tasks.map(([w, a, text, label, run, on], i) => (
          <Task key={i} $w={w} $run={run} $on={on} type="button" aria-label={label || undefined}>
            {typeof a === "string" ? special[a] : <Icon s={30} sw={0}>{a}</Icon>}
            {text && <TaskText>{text}</TaskText>}
          </Task>
        ))}
        <Tray>
          <TrayButton type="button" aria-label="Show hidden icons"><Chevron s={13} up /></TrayButton>
          {tray.map((t, i) => <TrayButton key={i} type="button" aria-label={`Tray item ${i + 1}`}>{t}</TrayButton>)}
          <TrayButton type="button" aria-label="Network"><Icon s={20} c="#eee" sw={1.8}><path d="M12 2H1v13h16v-5M6 19h8M10 15v4M15 1h4v6h-4zM17 7v13" /></Icon></TrayButton>
          <TrayButton $w={22} type="button" aria-label="Volume"><Icon s={18} w={20} c="#eee" sw={1.8}><path d="M1 6h3l5-4v14l-5-4H1zM12 6q2 3 0 6M15 3q4 6 0 12" /><path stroke="#777" d="M18 1q5 8 0 16" /></Icon></TrayButton>
          <Clock>9:44 AM<br />4/20/2026</Clock>
          <Icon s={20} c="#eee" sw={1.8}><path d="M8 3Q3 3 3 9v4l-2 3h16l-1-4M7 17q2 4 5 0M6 7h4l-4 5h4M13 1h5l-5 5h5" /></Icon>
        </Tray>
      </Taskbar>
    </Shell>
  );
}
